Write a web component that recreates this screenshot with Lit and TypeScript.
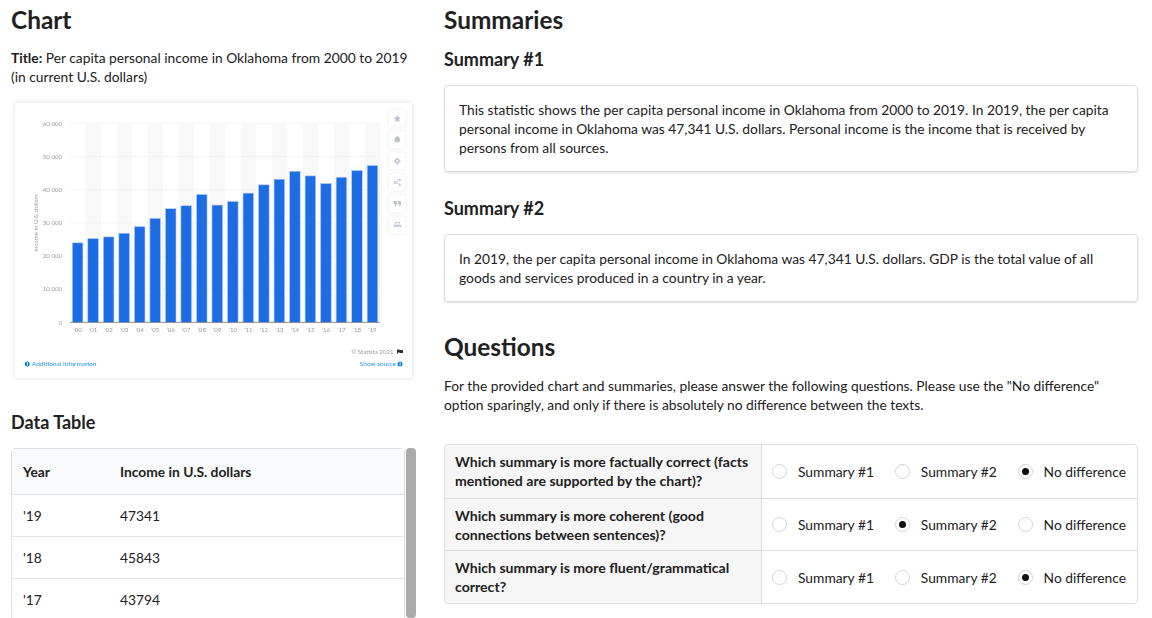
import { LitElement, css, html, svg } from "lit";
import { customElement } from "lit/decorators.js";

const INCOME = [
  24000, 25300, 25800, 26900, 28900, 31400, 34300, 35200, 38600, 35400,
  36500, 39000, 41500, 43200, 45600, 44200, 41900, 43794, 45843, 47341,
];
const Y_TICKS = [0, 10000, 20000, 30000, 40000, 50000, 60000];
const BASE_Y = 322.4;
const PX_PER_UNIT = 198.9 / 60000;
const STEP = 15.52;

const TOOL_ICONS = [
  "M0-4 1.2-1.3 4-1 1.9.9 2.5 3.8 0 2.3-2.5 3.8-1.9.9-4-1-1.2-1.3Z",
  "M-1-3.4C-1-4.6 1-4.6 1-3.4 2.6-2.8 2.8-1.6 2.8 0 2.8 1 3.4 1.6 3.8 2.2H-3.8C-3.4 1.6-2.8 1-2.8 0-2.8-1.6-2.6-2.8-1-3.4ZM-1 2.8H1C1 4-1 4-1 2.8Z",
  "M0-2.8A2.8 2.8 0 1 0 0 2.8 2.8 2.8 0 1 0 0-2.8ZM0-1.2A1.2 1.2 0 1 1 0 1.2 1.2 1.2 0 1 1 0-1.2ZM-.7-3.7H.7V-2.6H-.7ZM-.7 2.6H.7V3.7H-.7ZM-3.7-.7H-2.6V.7H-3.7ZM2.6-.7H3.7V.7H2.6Z",
  "M2.6-4A1.4 1.4 0 1 1 2.6-1.2 1.4 1.4 0 1 1 2.6-4ZM-2.6-1.4A1.4 1.4 0 1 1-2.6 1.4 1.4 1.4 0 1 1-2.6-1.4ZM2.6 1.2A1.4 1.4 0 1 1 2.6 4 1.4 1.4 0 1 1 2.6 1.2ZM-2.2-.5 2.2-2.9 2.6-2.2-1.8.2ZM-1.8-.2 2.6 2.2 2.2 2.9-2.2.5Z",
  "M-4-3H-.6V.4C-.6 2-1.6 3-3 3.2V2C-2.4 1.8-2 1.2-2 .6H-4ZM.6-3H4V.4C4 2 3 3 1.6 3.2V2C2.2 1.8 2.6 1.2 2.6.6H.6Z",
  "M-2.6-3.2H2.6V-.8H1.8V-2.4H-1.8V-.8H-2.6ZM-4-.4H4V2.6H2.6V1H-2.6V2.6H-4ZM-2 1.6H2V2.4H-2Z",
];

@customElement("statista-chart")
export class StatistaChart extends LitElement {
  static override styles = css`
    :host {
      display: block;
    }

    svg {
      display: block;
      filter: blur(0.55px);
      font-family: Lato, sans-serif;
    }

    .card {
      fill: #fff;
      filter: drop-shadow(0 0 2.5px rgba(40, 60, 90, 0.18));
    }

    .band {
      fill: #f8f8f9;
    }

    .grid {
      stroke: #f3f3f4;
      stroke-width: 1;
    }

    .bar {
      fill: #1c6ce4;
      stroke: #b7d0f6;
      stroke-width: 0.6;
    }

    .axis {
      stroke: #7b7b7b;
      stroke-width: 0.8;
    }

    .tick {
      fill: #9a9a9a;
      font-size: 6.1px;
    }

    .link {
      fill: #2a93e6;
      font-size: 6.5px;
    }

    .tool {
      fill: #fff;
      filter: drop-shadow(0 0 1.5px rgba(40, 60, 90, 0.12));
    }

    .tool-icon {
      fill: #b9c1ca;
    }

    .info {
      fill: #0a7fd8;
    }
  `;

  override render() {
    return html`
      <svg width="405" height="283" viewBox="11 99 405 283" role="img">
        <rect class="card" x="15" y="103" width="397" height="275" rx="2"></rect>
        ${INCOME.map((_, i) =>
          i % 2 ? svg`<rect class="band" x=${70 + i * STEP} y="123.5" width=${STEP} height="198.9"></rect>` : null,
        )}
        ${Y_TICKS.map((tick) => {
          const y = BASE_Y - tick * PX_PER_UNIT;
          return svg`
            <line class="grid" x1="70" x2="380" y1=${y} y2=${y}></line>
            <text class="tick" x="62" y=${y + 2.1} text-anchor="end">${tick === 0 ? "0" : `${tick / 1000} 000`}</text>
          `;
        })}
        <text class="tick" transform="translate(37.5 223) rotate(-90)" text-anchor="middle">Income in U.S. dollars</text>
        ${INCOME.map((value, i) => {
          const height = value * PX_PER_UNIT;
          const x = 72.3 + i * STEP;
          const year = String(i).padStart(2, "0");
          return svg`
            <rect class="bar" x=${x} y=${BASE_Y - height} width="10.6" height=${height}></rect>
            <text class="tick" x=${x + 5.3} y="332.2" text-anchor="middle">'${year}</text>
          `;
        })}
        <line class="axis" x1="70" x2="380" y1=${BASE_Y} y2=${BASE_Y}></line>
        ${TOOL_ICONS.map((d, i) => {
          const cy = 118.5 + i * 21.3;
          return svg`
            <rect class="tool" x="389" y=${cy - 8.5} width="16.6" height="17" rx="2"></rect>
            <path class="tool-icon" fill-rule="evenodd" transform="translate(397.3 ${cy}) scale(0.9)" d=${d}></path>
          `;
        })}
        <text class="tick" x="393.5" y="353.8" text-anchor="end">© Statista 2021</text>
        <path d="M397 349.4h2.2l.6.5h3.2v3.2h-3l-.6-.5h-1.6v1.4h-.8Z" fill="#333"></path>
        <circle class="info" cx="27.2" cy="364" r="2.5"></circle>
        <rect x="26.8" y="362.2" width="0.9" height="3.4" fill="#fff"></rect>
        <text class="link" x="32" y="366.2">Additional Information</text>
        <text class="link" x="396" y="366.2" text-anchor="end">Show source</text>
        <circle class="info" cx="400" cy="364" r="2.5"></circle>
        <rect x="399.6" y="362.2" width="0.9" height="3.4" fill="#fff"></rect>
      </svg>
    `;
  }
}

const TABLE_ROWS = [
  ["'19", "47341"],
  ["'18", "45843"],
  ["'17", "43794"],
];

const SUMMARIES = [
  "This statistic shows the per capita personal income in Oklahoma from 2000 to 2019. In 2019, the per capita personal income in Oklahoma was 47,341 U.S. dollars. Personal income is the income that is received by persons from all sources.",
  "In 2019, the per capita personal income in Oklahoma was 47,341 U.S. dollars. GDP is the total value of all goods and services produced in a country in a year.",
];

const OPTIONS = ["Summary #1", "Summary #2", "No difference"];

const QUESTIONS = [
  { text: "Which summary is more factually correct (facts mentioned are supported by the chart)?", picked: 2 },
  { text: "Which summary is more coherent (good connections between sentences)?", picked: 1 },
  { text: "Which summary is more fluent/grammatical correct?", picked: 2 },
];

@customElement("app-root")
export class AppRoot extends LitElement {
  static override styles = css`
    :host {
      display: block;
      height: 618px;
      overflow: hidden;
      background: #fff;
      color: #212121;
      font-family: Lato, sans-serif;
      font-size: 13.8px;
      line-height: 19px;
    }

    .page {
      display: grid;
      grid-template-columns: 405px 694px;
      column-gap: 28px;
      padding-left: 11px;
    }

    h1,
    h2 {
      margin: 0;
      font-weight: 700;
    }

    h1 {
      font-size: 24.4px;
      line-height: 30px;
    }

    h2 {
      font-size: 18px;
      line-height: 24px;
    }

    .col-title {
      padding-top: 5px;
    }

    .chart-title {
      margin: 13px 0 0;
    }

    .chart-title b {
      font-weight: 700;
    }

    statista-chart {
      margin-top: 13px;
    }

    .table-title {
      margin-top: 28px;
    }

    .table-wrap {
      position: relative;
      margin-top: 14px;
    }

    table {
      width: 394px;
      border-collapse: separate;
      border-spacing: 0;
      border: 1px solid #dfe1e4;
      border-radius: 4px;
    }

    th,
    td {
      padding: 0 11px;
      text-align: left;
      border-bottom: 1px solid #e4e5e7;
    }

    th {
      height: 45px;
      background: #f9fafb;
      font-weight: 700;
    }

    td {
      height: 41px;
    }

    .year {
      width: 75px;
    }

    .scrollbar {
      position: absolute;
      top: 0;
      right: 0;
      width: 10px;
      height: 170px;
      border-radius: 4px;
      background: #ababab;
    }

    .summary-title {
      margin-top: 12px;
    }

    .summary-title + .box {
      margin-top: 14px;
    }

    .box + .summary-title {
      margin-top: 24px;
    }

    .box {
      padding: 14px;
      border: 1px solid #dedede;
      border-radius: 4px;
      box-shadow: 0 1px 2px rgba(0, 0, 0, 0.14);
    }

    .q-title {
      margin-top: 30px;
    }

    .q-intro {
      margin: 14px 0 0;
    }

    .matrix {
      margin-top: 30px;
      border: 1px solid #dedede;
      border-radius: 4px;
      overflow: hidden;
    }

    .q-row {
      display: grid;
      grid-template-columns: 317px 1fr;
      box-sizing: border-box;
      height: 52.7px;
    }

    .q-row + .q-row {
      border-top: 1px solid #dedede;
    }

    .q-text {
      display: flex;
      align-items: center;
      padding: 0 10px;
      background: #f6f6f6;
      border-right: 1px solid #dedede;
      font-size: 14.1px;
      font-weight: 700;
    }

    .q-options {
      display: flex;
      align-items: center;
      justify-content: space-between;
      padding: 0 11px 0 10px;
    }

    .option {
      display: flex;
      align-items: center;
      gap: 11px;
    }

    .radio {
      display: flex;
      align-items: center;
      justify-content: center;
      box-sizing: border-box;
      width: 15px;
      height: 15px;
      border: 1px solid #d4d4d5;
      border-radius: 50%;
      background: #fff;
    }

    .radio.on::after {
      content: "";
      width: 7px;
      height: 7px;
      border-radius: 50%;
      background: #111;
    }
  `;

  override render() {
    return html`
      <div class="page">
        <section>
          <h1 class="col-title">Chart</h1>
          <p class="chart-title"><b>Title:</b> Per capita personal income in Oklahoma from 2000 to 2019 (in current U.S. dollars)</p>
          <statista-chart></statista-chart>
          <h2 class="table-title">Data Table</h2>
          <div class="table-wrap">
            <table>
              <thead>
                <tr><th class="year">Year</th><th>Income in U.S. dollars</th></tr>
              </thead>
              <tbody>
                ${TABLE_ROWS.map(([year, income]) => html`<tr><td>${year}</td><td>${income}</td></tr>`)}
              </tbody>
            </table>
            <div class="scrollbar"></div>
          </div>
        </section>
        <section>
          <h1 class="col-title">Summaries</h1>
          ${SUMMARIES.map(
            (text, i) => html`
              <h2 class="summary-title">Summary #${i + 1}</h2>
              <div class="box">${text}</div>
            `,
          )}
          <h1 class="q-title">Questions</h1>
          <p class="q-intro">For the provided chart and summaries, please answer the following questions. Please use the "No difference" option sparingly, and only if there is absolutely no difference between the texts.</p>
          <div class="matrix">
            ${QUESTIONS.map(
              (q) => html`
                <div class="q-row">
                  <div class="q-text">${q.text}</div>
                  <div class="q-options">
                    ${OPTIONS.map(
                      (label, i) => html`
                        <span class="option">
                          <span class="radio ${i === q.picked ? "on" : ""}"></span>
                          <span>${label}</span>
                        </span>
                      `,
                    )}
                  </div>
                </div>
              `,
            )}
          </div>
        </section>
      </div>
    `;
  }
}
